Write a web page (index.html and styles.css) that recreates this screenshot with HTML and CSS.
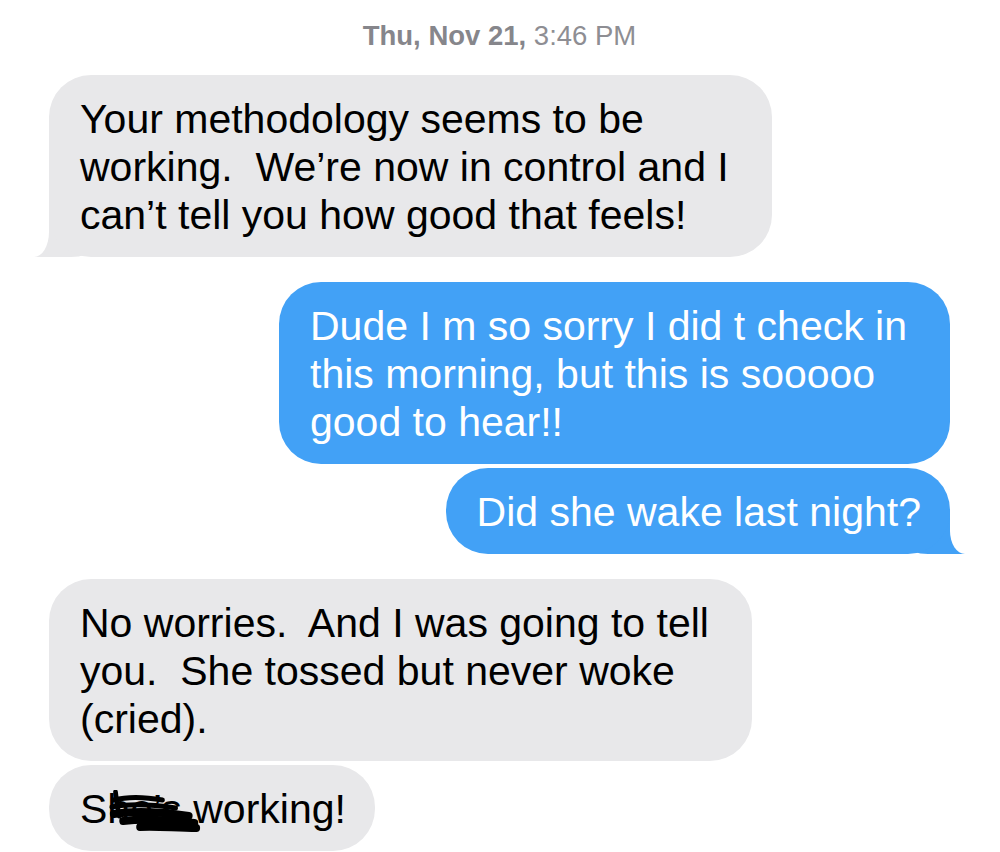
FILE: index.html
```html
<!DOCTYPE html>
<html lang="en">

<head>
    <meta charset="UTF-8" />
    <title>Messages</title>
    <meta name="viewport" content="width=device-width, initial-scale=1.0" />
    <link rel="stylesheet" href="styles.css">
</head>

<body>
    <div class="thread">
        <div class="stamp"><b>Thu, Nov 21,</b> 3:46 PM</div>

        <div class="msg them wrap tail">Your methodology seems to be<br>working.&nbsp; We’re now in control and I<br>can’t tell you how good that feels!</div>

        <div class="msg me wrap">Dude I m so sorry I did t check in<br>this morning, but this is sooooo<br>good to hear!!</div>
        <div class="msg me tail">Did she wake last night?</div>

        <div class="msg them wrap">No worries.&nbsp; And I was going to tell<br>you.&nbsp; She tossed but never woke<br>(cried).</div>
        <div class="msg them">Sh<span class="redact">e’s<svg class="scribble" viewBox="0 0 100 44" preserveAspectRatio="none">
                    <path d="M8 2 C9 10 10 18 12 26" />
                    <path d="M6 10 C22 6 40 7 58 10" />
                    <path d="M4 17 C26 13 50 15 72 18" />
                    <path d="M6 24 C30 20 58 22 86 26" class="thick" />
                    <path d="M16 31 C40 28 66 30 92 33" class="thick" />
                    <path d="M34 37 C52 36 72 38 94 38" class="thick" />
                </svg></span> working!</div>
    </div>
</body>

</html>
```

FILE: styles.css
```css
* {
    box-sizing: border-box;
}

body {
    margin: 0;
    background: #fff;
    font-family: 'Liberation Sans', Arial, sans-serif;
}

.thread {
    display: flex;
    flex-direction: column;
    padding: 20px 50px 0 49px;
}

.stamp {
    align-self: center;
    font-size: 27.5px;
    line-height: 32px;
    color: #8e8e93;
    margin-bottom: 23px;
}

.stamp b {
    font-weight: bold;
    color: #86868b;
}

.msg {
    position: relative;
    font-size: 41px;
    line-height: 48px;
    padding: 20px 29px 18px 31px;
    border-radius: 42px;
    white-space: nowrap;
}

.msg.wrap {
    padding-right: 43px;
}

.them {
    align-self: flex-start;
    background: #e8e8ea;
    color: #000;
}

.me {
    align-self: flex-end;
    background: #42a1f6;
    color: #fff;
}

.them + .me,
.me + .them {
    margin-top: 25px;
}

.them + .them,
.me + .me {
    margin-top: 4px;
}

/* bubble tails, kept behind the text */
.tail::before,
.tail::after {
    content: "";
    position: absolute;
    bottom: 0;
    z-index: -1;
}

.them.tail::before {
    left: -15px;
    width: 57px;
    height: 42px;
    background: #e8e8ea;
    border-bottom-right-radius: 20px 8px;
}

.them.tail::after {
    left: -60px;
    width: 60px;
    height: 44px;
    background: #fff;
    border-bottom-right-radius: 15px 25px;
}

.me.tail::before {
    right: -15px;
    width: 57px;
    height: 42px;
    background: #42a1f6;
    border-bottom-left-radius: 20px 8px;
}

.me.tail::after {
    right: -60px;
    width: 60px;
    height: 44px;
    background: #fff;
    border-bottom-left-radius: 15px 23px;
}

.redact {
    position: relative;
}

.scribble {
    position: absolute;
    left: -22px;
    top: 4px;
    width: 94px;
    height: 44px;
}

.scribble path {
    fill: none;
    stroke: #000;
    stroke-width: 5;
    stroke-linecap: round;
}

.scribble path.thick {
    stroke-width: 8;
}
```
